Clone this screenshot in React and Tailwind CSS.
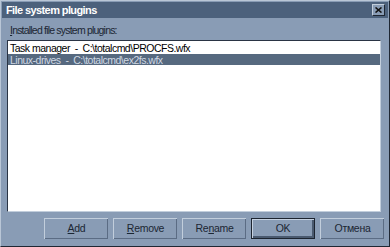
import React from 'react';

const Btn = ({ children, isDefault }) => (
  <button
    className={`w-[64px] h-[21px] text-[10.5px] tracking-[-0.3px] text-[#1b2633] bg-[#899cb5] ${
      isDefault
        ? 'border border-[#1c2430] shadow-[inset_1px_1px_0_#c5d1e0,inset_-2px_-2px_0_#4a5a70]'
        : 'border-t border-l border-[#c2cedc] border-r-[#2a3444] border-b-[#2a3444] shadow-[inset_-1px_-1px_0_#5b6c84]'
    }`}
  >
    {children}
  </button>
);

const App = () => {
  return (
    <div
      className="w-[390px] h-[247px] bg-[#899cb5] flex flex-col border border-[#b9c6d6] border-r-[#1f2733] border-b-[#1f2733] overflow-hidden"
      style={{ fontFamily: '"Liberation Sans", Arial, sans-serif' }}
    >
      {/* Title bar */}
      <div className="h-[16px] bg-[#4c617c] flex items-center justify-between pl-[4px] pr-[3px] mx-[1px] mt-[1px]">
        <span className="text-white text-[11px] leading-none font-bold tracking-[-0.6px]">File system plugins</span>
        <button className="w-[13px] h-[12px] bg-[#899cb5] border border-[#c2cedc] border-r-[#1f2733] border-b-[#1f2733] flex items-center justify-center">
          <svg width="7" height="6" viewBox="0 0 7 6">
            <path d="M0.5 0.5 L6.5 5.5 M6.5 0.5 L0.5 5.5" stroke="#111" strokeWidth="1.6" />
          </svg>
        </button>
      </div>

      {/* Body */}
      <div className="flex-1 flex flex-col pl-[6px] pr-[5px] pt-[6px]">
        <div className="text-[10.5px] leading-[13px] tracking-[-0.8px] text-[#1b2633] mb-[3px] pl-[3px]">
          <span className="underline">I</span>nstalled file system plugins:
        </div>
        <div className="h-[172px] mr-[3px] pt-[1px] bg-white border-t border-l border-[#2a3444] border-r border-b border-r-[#c2cedc] border-b-[#c2cedc] text-[10.5px] leading-[12px] tracking-[-0.5px]">
          <div className="h-[12px] pl-[2px] text-black whitespace-pre">{'Task manager  -  C:\\totalcmd\\PROCFS.wfx'}</div>
          <div className="h-[11px] pl-[2px] bg-[#56697f] text-[#cfd8e3] whitespace-pre">{'Linux-drives  -  C:\\totalcmd\\ex2fs.wfx'}</div>
        </div>
        <div className="flex justify-end gap-[5px] mt-[6px]">
          <Btn><span className="underline">A</span>dd</Btn>
          <Btn><span className="underline">R</span>emove</Btn>
          <Btn>Re<span className="underline">n</span>ame</Btn>
          <Btn isDefault>OK</Btn>
          <Btn>Отмена</Btn>
        </div>
      </div>
    </div>
  );
};

export default App;
